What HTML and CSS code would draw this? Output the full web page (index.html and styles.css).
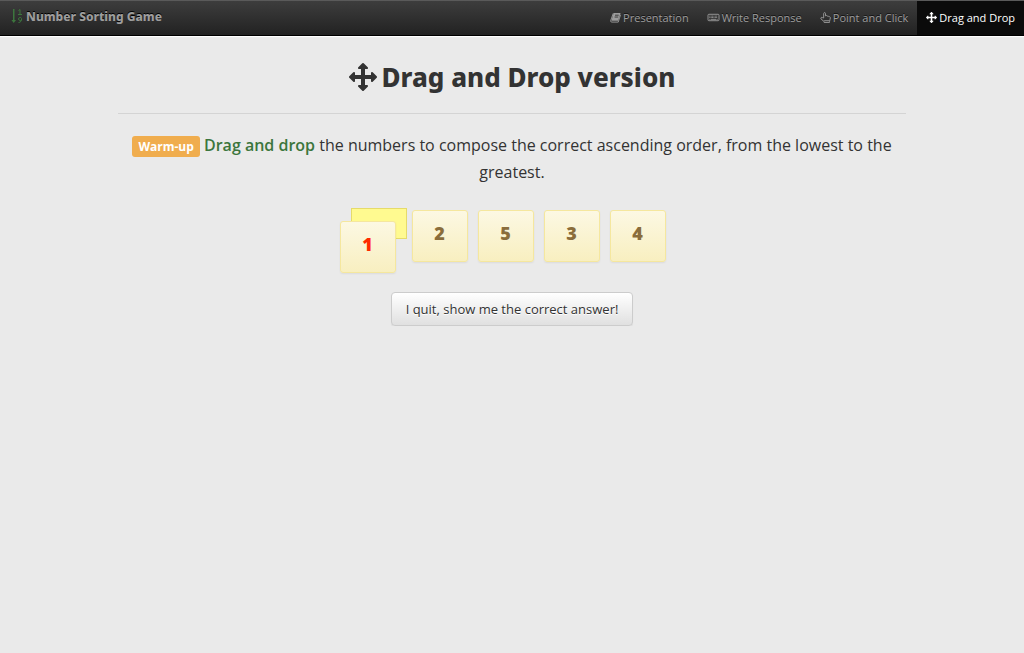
FILE: index.html
```html
<!DOCTYPE html>
<html lang="en">
<head>
<meta charset="utf-8">
<title>Number Sorting Game</title>
<link rel="stylesheet" href="styles.css">
</head>
<body>
<svg class="defs" aria-hidden="true">
  <symbol id="arrows" viewBox="0 0 1792 1792"><path d="M1792 896q0 26-19 45l-256 256q-19 19-45 19t-45-19-19-45v-128h-384v384h128q26 0 45 19t19 45-19 45l-256 256q-19 19-45 19t-45-19l-256-256q-19-19-19-45t19-45 45-19h128v-384h-384v128q0 26-19 45t-45 19-45-19l-256-256q-19-19-19-45t19-45l256-256q19-19 45-19t45 19 19 45v128h384v-384h-128q-26 0-45-19t-19-45 19-45l256-256q19-19 45-19t45 19l256 256q19 19 19 45t-19 45-45 19h-128v384h384v-128q0-26 19-45t45-19 45 19l256 256q19 19 19 45z"/></symbol>
</svg>
<header class="navbar">
  <a class="brand" href="#">
    <svg class="brand-icon" viewBox="0 0 12 16" aria-hidden="true"><path d="M2 1h1.500v11H5l-2.250 3L.5 12H2z" fill="currentColor"/><path d="M7.500 2.500L9 1.500v5M7 6.500h4M10.500 11.500a1.500 1.500 0 1 1 0-1c.3 2.200-.8 4-3 4" fill="none" stroke="currentColor"/></svg>
    <span>Number Sorting Game</span>
  </a>
  <nav class="menu">
    <a href="#"><svg class="icon" viewBox="0 0 12 12" aria-hidden="true"><path d="M4 1h7.500L9 9.500H1.500z"/><path d="M3.500 1.500l-2.800 8q-.2 1.500 1.300 1.500h7l2.500-8" fill="none" stroke="currentColor"/><path d="M5.500 3.500h4M5 5.500h4" stroke="#333"/></svg><span>Presentation</span></a>
    <a href="#"><svg class="icon icon-wide" viewBox="0 0 14 12" aria-hidden="true"><rect x="1" y="2.500" width="12" height="7" rx="1" fill="none" stroke="currentColor"/><path d="M2.500 4.500h9M2.500 6h9" stroke="currentColor" stroke-dasharray="1 .5"/><path d="M4 8h6M2.500 8h1M10.500 8h1" stroke="currentColor"/></svg><span>Write Response</span></a>
    <a href="#"><svg class="icon" viewBox="0 0 12 12" aria-hidden="true"><path d="M4 6.500V1.800c0-1.600 2-1.600 2 0v2.400c.7-.6 1.600-.4 1.900.3.700-.3 1.400 0 1.700.6 1-.2 1.700.3 1.700 1.300 0 1.700-.9 2.300-.9 4.100v.9H4.500v-1L1.200 7.700C.3 6.400 1.700 5.300 2.700 6.100zM4.500 9.500h5.800" fill="none" stroke="currentColor"/></svg><span>Point and Click</span></a>
    <a class="active" href="#" aria-current="page"><svg class="icon" aria-hidden="true"><use href="#arrows"/></svg><span>Drag and Drop</span></a>
  </nav>
</header>
<main class="content">
  <h1 class="title"><svg class="title-icon" aria-hidden="true"><use href="#arrows"/></svg><span>Drag and Drop version</span></h1>
  <p class="lead"><span class="label">Warm-up</span> <strong>Drag and drop</strong> the numbers to compose the correct ascending order, from the lowest to the greatest.</p>
  <ul class="cards">
    <li class="slot"><span class="placeholder"></span><span class="card dragging">1</span></li>
    <li class="card">2</li>
    <li class="card">5</li>
    <li class="card">3</li>
    <li class="card">4</li>
  </ul>
  <button class="quit" type="button">I quit, show me the correct answer!</button>
</main>
</body>
</html>
```
FILE: styles.css
```css
* { box-sizing: border-box; }
body {
  margin: 0;
  background: #eaeaea;
  color: #333;
  font-family: "Open Sans", "Noto Sans", sans-serif;
}
.defs { display: none; }
.navbar {
  display: flex;
  justify-content: space-between;
  height: 36px;
  border-top: 1px solid #5a5a5a;
  border-bottom: 1px solid #000;
  background: linear-gradient(#3d3d3d, #222);
  box-shadow: 0 1px 1px #fff;
}
a { text-decoration: none; }
.brand {
  display: flex;
  align-items: center;
  gap: 3px;
  padding: 0 0 4px 11px;
  color: #9d9d9d;
  font-family: "Noto Sans", sans-serif;
  font-size: 12px;
  font-weight: 800;
  text-shadow: 0 -1px 0 #000;
}
.brand-icon { width: 12px; height: 16px; color: #3c763d; }
.menu { display: flex; }
.menu a {
  display: flex;
  align-items: center;
  gap: 2px;
  padding: 0 9px 2px;
  color: #9d9d9d;
  font-size: 11px;
  text-shadow: 0 -1px 0 #111;
}
.menu a.active { background: #0b0b0b; color: #fff; }
.icon { width: 11px; height: 11px; fill: currentColor; }
.icon-wide { width: 13px; }
.content {
  display: flex;
  flex-direction: column;
  align-items: center;
  width: 77%;
  margin: 0 auto;
}
.title {
  display: flex;
  align-items: center;
  justify-content: center;
  gap: 5px;
  align-self: stretch;
  height: 78px;
  margin: 0;
  padding-top: 4px;
  border-bottom: 1px solid #d4d4d4;
  font-family: "Noto Sans", sans-serif;
  font-size: 26px;
  font-weight: 800;
}
.title-icon { width: 28px; height: 28px; fill: currentColor; }
.lead {
  margin: 18px 0 24px;
  padding: 0 12px;
  font-size: 16px;
  line-height: 27px;
  text-align: center;
}
.lead strong { color: #3c763d; font-weight: 600; }
.label {
  padding: 2px 6px;
  border-radius: 3px;
  background: #f0ad4e;
  color: #fff;
  font-size: 12px;
  font-weight: 700;
  line-height: 1;
}
.cards {
  display: flex;
  align-items: flex-start;
  gap: 10px;
  margin: 0 0 30px;
  padding: 0 8px 0 0;
  list-style: none;
}
.slot { position: relative; width: 56px; margin: -2px -5px 0 0; }
.placeholder {
  display: block;
  height: 31px;
  border: 1px solid #e6db6a;
  background: #fffa90;
}
.card {
  width: 56px;
  height: 52px;
  border: 1px solid #f5e79e;
  border-radius: 3px;
  background: linear-gradient(#fcf8e3, #f8efc0);
  box-shadow: 0 1px 2px #0001;
  color: #8a6d3b;
  font-size: 18px;
  font-weight: 800;
  line-height: 44px;
  text-align: center;
}
.dragging { position: absolute; top: 13px; left: -11px; color: #ff2a00; }
.quit {
  padding: 6px 14px;
  border: 1px solid #ccc;
  border-radius: 4px;
  background: linear-gradient(#fff, #e0e0e0);
  box-shadow: 0 1px 1px #0001;
  color: #333;
  font-family: inherit;
  font-size: 13px;
  line-height: 20px;
  text-shadow: 0 1px 0 #fff;
}
```
